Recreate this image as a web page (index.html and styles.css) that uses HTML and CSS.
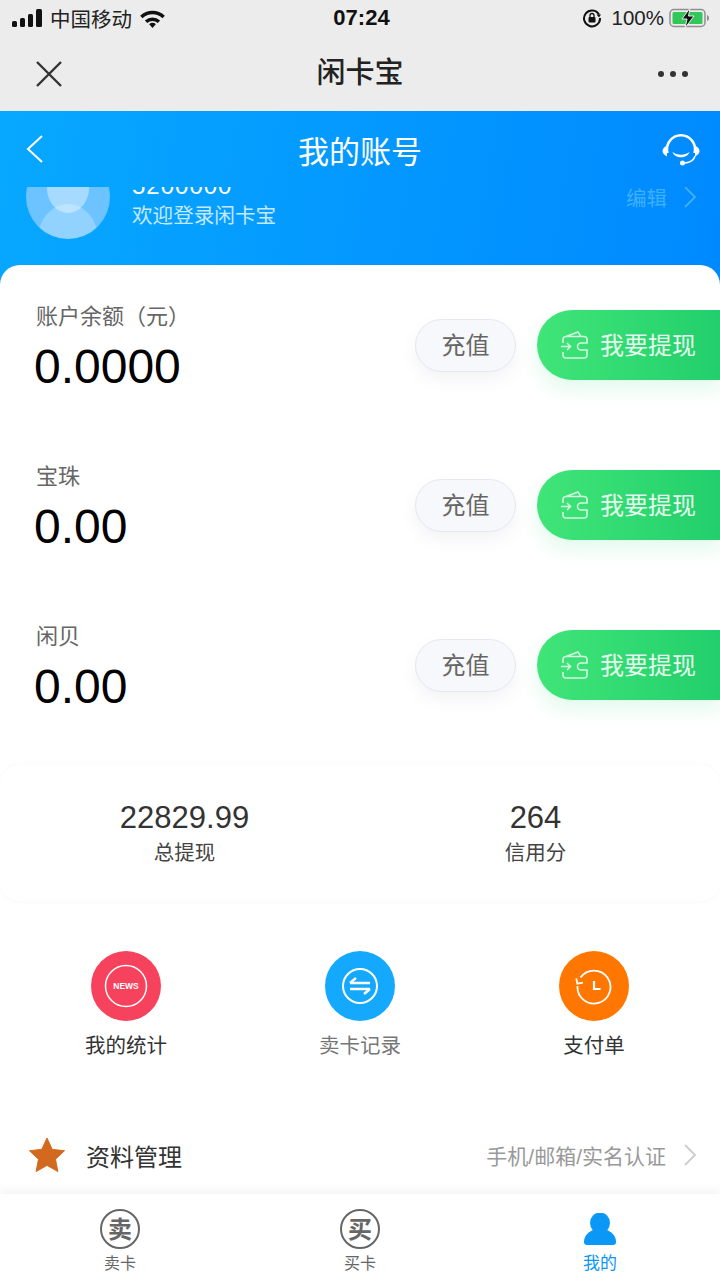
FILE: index.html
```html
<!DOCTYPE html>
<html lang="zh-CN">
<head>
    <meta charset="UTF-8">
    <meta name="viewport" content="width=device-width, initial-scale=1.0">
    <title>闲卡宝</title>
    <link rel="stylesheet" href="styles.css">
</head>
<body>

<div class="top">
    <div class="status">
        <div class="status-left">
            <svg class="signal" width="31" height="18" viewBox="0 0 31 18"><rect x="0" y="12" width="5" height="6" rx="1.500"/><rect x="8" y="9" width="5" height="9" rx="1.500"/><rect x="16" y="5" width="5" height="13" rx="1.500"/><rect x="24" y="0" width="6" height="18" rx="1.500"/></svg>
            <span>中国移动</span>
            <svg width="27" height="19" viewBox="0 0 28 20"><path d="M1 7a19 19 0 0 1 26 0l-2.500 2.800a15 15 0 0 0-21 0z"/><path d="M6 12a12 12 0 0 1 16 0l-2.500 2.800a8 8 0 0 0-11 0z"/><path d="M10.500 16a5 5 0 0 1 7 0L14 20z"/></svg>
        </div>
        <div class="status-time">07:24</div>
        <div class="status-right">
            <svg class="status-lock" width="20" height="20" viewBox="0 0 20 20"><path d="M17 6.500A8 8 0 1 0 18 10" fill="none" stroke="#111" stroke-width="2"/><path d="M14.500 6.500h4.500l-2 3z"/><rect x="6.500" y="9" width="7" height="5.500" rx="1"/><path d="M8 9V7.500a2 2 0 0 1 4 0V9" fill="none" stroke="#111" stroke-width="1.300"/></svg>
            <span>100%</span>
            <svg width="42" height="20" viewBox="0 0 42 20"><rect x="1" y="1.500" width="35" height="17" rx="4" fill="none" stroke="#8f8f8f" stroke-width="1.500"/><rect x="3.500" y="4" width="30" height="12" rx="1.500" fill="#33c759"/><path d="M38 7v6c1.500-.5 2-1.500 2-3s-.5-2.500-2-3z" fill="#8f8f8f"/><path d="M21 0l-8 11h5l-2 9 9-12h-5.500z" fill="#111" stroke="#ececec" stroke-width="1"/></svg>
        </div>
    </div>
    <div class="nav">
        <svg width="28" height="28" viewBox="0 0 28 28"><path d="M2 2l24 24M26 2L2 26" stroke="#333" stroke-width="2.400" fill="none"/></svg>
        <div class="nav-title">闲卡宝</div>
        <div class="dots"><i></i><i></i><i></i></div>
    </div>
</div>

<div class="hero">
    <div class="hero-bar">
        <svg class="hero-back" width="18" height="28" viewBox="0 0 18 28"><path d="M16 1L2 14l14 13" stroke="#fff" stroke-width="2" fill="none"/></svg>
        <div class="hero-title">我的账号</div>
        <svg class="hero-help" width="38" height="34" viewBox="0 0 38 34"><path d="M5.500 21A14 14 0 1 1 32.500 21" fill="none" stroke="#fff" stroke-width="2.600"/><path d="M5 13.500C2 15 .5 17 .5 19s1.500 4 4.500 5.500zM33 13.500c3 1.500 4.500 3.500 4.500 5.500S36 23 33 24.500z" fill="#fff"/><path d="M10.500 20c5 3.500 12 3.500 17 0-2 7-15 7-17 0z" fill="#fff"/><path d="M33 24c-1 4-5 6.500-10 7" fill="none" stroke="#fff" stroke-width="1.500"/><circle cx="20.500" cy="31" r="2.500" fill="#fff"/></svg>
    </div>
    <div class="profile">
        <div class="profile-inner">
            <div class="avatar"><div class="avatar-head"></div><div class="avatar-body"></div></div>
            <div class="profile-text">
                <div class="profile-num">5200000</div>
                <div class="profile-hello">欢迎登录闲卡宝</div>
            </div>
            <div class="profile-edit">
                <span>编辑</span>
                <svg width="14" height="22" viewBox="0 0 14 22"><path d="M2 1l10 10L2 21" stroke="currentColor" stroke-width="1.800" fill="none"/></svg>
            </div>
        </div>
    </div>
</div>

<div class="sheet">
    <div class="balance">
        <div class="balance-info">
            <div class="balance-label">账户余额（元）</div>
            <div class="balance-value">0.0000</div>
        </div>
        <div class="btn-charge">充值</div>
        <div class="btn-cash">
            <svg width="28" height="28" viewBox="0 0 28 28"><path d="M2 12V8.500a3 3 0 0 1 3-3h18a3 3 0 0 1 3 3V12h-6a3.500 3.500 0 0 0 0 7h6v5a3 3 0 0 1-3 3H5a3 3 0 0 1-3-3v-3M5 5.500L17 1l3 4.500M0 15.500h9M6 12l3.500 3.500L6 19" fill="none" stroke="#d5f7e0" stroke-width="1.600"/></svg>
            <span>我要提现</span>
        </div>
    </div>
    <div class="balance">
        <div class="balance-info">
            <div class="balance-label">宝珠</div>
            <div class="balance-value">0.00</div>
        </div>
        <div class="btn-charge">充值</div>
        <div class="btn-cash">
            <svg width="28" height="28" viewBox="0 0 28 28"><path d="M2 12V8.500a3 3 0 0 1 3-3h18a3 3 0 0 1 3 3V12h-6a3.500 3.500 0 0 0 0 7h6v5a3 3 0 0 1-3 3H5a3 3 0 0 1-3-3v-3M5 5.500L17 1l3 4.500M0 15.500h9M6 12l3.500 3.500L6 19" fill="none" stroke="#d5f7e0" stroke-width="1.600"/></svg>
            <span>我要提现</span>
        </div>
    </div>
    <div class="balance">
        <div class="balance-info">
            <div class="balance-label">闲贝</div>
            <div class="balance-value">0.00</div>
        </div>
        <div class="btn-charge">充值</div>
        <div class="btn-cash">
            <svg width="28" height="28" viewBox="0 0 28 28"><path d="M2 12V8.500a3 3 0 0 1 3-3h18a3 3 0 0 1 3 3V12h-6a3.500 3.500 0 0 0 0 7h6v5a3 3 0 0 1-3 3H5a3 3 0 0 1-3-3v-3M5 5.500L17 1l3 4.500M0 15.500h9M6 12l3.500 3.500L6 19" fill="none" stroke="#d5f7e0" stroke-width="1.600"/></svg>
            <span>我要提现</span>
        </div>
    </div>

    <div class="stats">
        <div class="stat">
            <div class="stat-num">22829.99</div>
            <div class="stat-label">总提现</div>
        </div>
        <div class="stat">
            <div class="stat-num">264</div>
            <div class="stat-label">信用分</div>
        </div>
    </div>

    <div class="shortcuts">
        <div class="shortcut">
            <div class="circle circle-red">
                <svg width="44" height="44" viewBox="0 0 44 44"><circle cx="22" cy="22" r="20.500" fill="none" stroke="#fff" stroke-width="1.500"/><text class="news" x="22" y="25" text-anchor="middle">NEWS</text></svg>
            </div>
            <div class="shortcut-label">我的统计</div>
        </div>
        <div class="shortcut">
            <div class="circle circle-blue">
                <svg width="38" height="38" viewBox="0 0 38 38"><circle cx="19" cy="19" r="17" fill="none" stroke="#fff" stroke-width="2"/><path d="M9 16h20M9 16l6-5M29 22H9M29 22l-6 5" fill="none" stroke="#fff" stroke-width="2.400"/></svg>
            </div>
            <div class="shortcut-label shortcut-label-gray">卖卡记录</div>
        </div>
        <div class="shortcut">
            <div class="circle circle-orange">
                <svg width="38" height="38" viewBox="0 0 38 38"><path d="M5.500 10.500A16.500 16.500 0 1 1 2.500 19" fill="none" stroke="#fff" stroke-width="1.800"/><path d="M1.300 11.300l1 5.400 5.700-1" fill="none" stroke="#fff" stroke-width="1.800"/><path d="M19 14v8h6.500" fill="none" stroke="#fff" stroke-width="2.200"/></svg>
            </div>
            <div class="shortcut-label">支付单</div>
        </div>
    </div>

    <div class="item">
        <svg width="36" height="36" viewBox="0 0 38 38"><path d="M19 1l5.500 12 13 1.500-9.500 9 2.500 13L19 30 7.500 36.500l2.500-13-9.500-9 13-1.500z" fill="#d2691e" stroke="#d2691e" stroke-linejoin="round"/></svg>
        <div class="item-title">资料管理</div>
        <div class="item-note">手机/邮箱/实名认证</div>
        <svg width="14" height="22" viewBox="0 0 14 22"><path d="M2 1l10 10L2 21" stroke="#ccc" stroke-width="1.800" fill="none"/></svg>
    </div>
</div>

<div class="tabbar">
    <div class="tab">
        <div class="tab-seal">卖</div>
        <div class="tab-label">卖卡</div>
    </div>
    <div class="tab">
        <div class="tab-seal">买</div>
        <div class="tab-label">买卡</div>
    </div>
    <div class="tab tab-on">
        <svg width="32" height="32" viewBox="0 0 32 32"><ellipse cx="16" cy="10" rx="10" ry="10.500" fill="#0a97f5"/><path d="M0 29c0-7 5-10 9-12h14c4 2 9 5 9 12 0 2-1 3-3 3H3c-2 0-3-1-3-3z" fill="#0a97f5"/></svg>
        <div class="tab-label">我的</div>
    </div>
</div>

</body>
</html>
```

FILE: styles.css
```css
* {
    box-sizing: border-box;
}
body {
    margin: 0;
    width: 720px;
    height: 1280px;
    overflow: hidden;
    position: relative;
    background-color: #fff;
    font-family: "Liberation Sans", "Noto Sans CJK SC", sans-serif;
    color: #333;
}
.top {
    height: 111px;
    background-color: #ececec;
}
.status {
    height: 36px;
    padding: 0 9px 0 12px;
    display: grid;
    grid-template-columns: 1fr auto 1fr;
    align-items: center;
    font-size: 20.500px;
    color: #222;
}
.status-left {
    display: flex;
    align-items: center;
    gap: 7px;
}
.status-left svg,
.status-right svg {
    fill: #111;
}
.status-time {
    font-weight: bold;
    font-size: 22px;
    color: #111;
}
.status-right {
    display: flex;
    align-items: center;
    justify-content: flex-end;
    gap: 5px;
    font-size: 20.500px;
}
.status-lock {
    margin-right: 5px;
}
.nav {
    height: 75px;
    padding: 0 32px;
    display: grid;
    grid-template-columns: 1fr auto 1fr;
    align-items: center;
}
.nav svg {
    margin-left: 3px;
}
.nav-title {
    padding-bottom: 8px;
    font-size: 29px;
    font-weight: 500;
    color: #222;
}
.dots {
    justify-self: end;
    display: flex;
    gap: 6px;
}
.dots i {
    width: 6px;
    height: 6px;
    border-radius: 50%;
    background-color: #333;
}
.hero {
    height: 174px;
    background: linear-gradient(100deg, #07a8ff, #0089ff);
    color: #fff;
}
.hero-bar {
    height: 76px;
    padding: 0 20px;
    display: grid;
    grid-template-columns: 1fr auto 1fr;
    align-items: center;
}
.hero-back {
    margin-left: 6px;
}
.hero-title {
    font-size: 31px;
}
.hero-help {
    justify-self: end;
}
.profile {
    height: 78px;
    overflow: hidden;
}
.profile-inner {
    margin-top: -32px;
    padding: 0 23px 0 26px;
    display: flex;
    align-items: flex-start;
}
.avatar {
    width: 84px;
    height: 84px;
    border-radius: 50%;
    background-color: #6cc3ff;
    position: relative;
    overflow: hidden;
    flex-shrink: 0;
}
.avatar-head {
    position: absolute;
    left: 21px;
    top: 8px;
    width: 42px;
    height: 50px;
    border-radius: 50%;
    background-color: rgba(255, 255, 255, 0.4);
}
.avatar-body {
    position: absolute;
    left: 12px;
    top: 49px;
    width: 60px;
    height: 70px;
    border-radius: 50%;
    background-color: rgba(255, 255, 255, 0.25);
}
.profile-text {
    margin-left: 22px;
}
.profile-num {
    font-size: 24px;
    line-height: 28px;
    margin-top: 17px;
    letter-spacing: 1px;
}
.profile-hello {
    font-size: 20.600px;
    line-height: 28px;
    margin-top: 2px;
    color: #c4e8ff;
}
.profile-edit {
    margin-left: auto;
    margin-top: 27px;
    display: flex;
    align-items: center;
    gap: 16px;
    font-size: 20.500px;
    color: #3fb0ff;
}
.sheet {
    position: relative;
    margin-top: -20px;
    height: 930px;
    background-color: #fff;
    border-radius: 20px 20px 0 0;
}
.balance {
    height: 160px;
    display: flex;
    align-items: center;
}
.balance-info {
    margin-left: 34px;
    margin-right: auto;
    padding-top: 11px;
}
.balance-label {
    font-size: 22px;
    line-height: 30px;
    color: #666;
    margin-left: 2px;
    margin-bottom: 3px;
}
.balance-value {
    font-size: 48px;
    line-height: 64px;
    color: #000;
}
.btn-charge {
    width: 101px;
    height: 53px;
    margin-right: 21px;
    padding-bottom: 4px;
    border: 1px solid #e6e6ef;
    border-radius: 27px;
    background-color: #f7f8fb;
    box-shadow: 0 8px 16px rgba(120, 120, 150, 0.08);
    display: flex;
    align-items: center;
    justify-content: center;
    font-size: 24px;
    color: #666;
}
.btn-cash {
    width: 183px;
    height: 70px;
    padding-left: 24px;
    border-radius: 35px 0 0 35px;
    background: linear-gradient(90deg, #40e578, #22cf6c);
    box-shadow: 0 10px 20px rgba(50, 220, 120, 0.14);
    display: flex;
    align-items: center;
    gap: 11px;
    font-size: 24px;
    color: #e6fbee;
}
.btn-cash span {
    padding-bottom: 4px;
}
.stats {
    margin-top: 20px;
    height: 136px;
    padding: 2px 9px 0;
    border-radius: 20px;
    box-shadow: 0 0 6px rgba(0, 0, 0, 0.035);
    display: grid;
    grid-template-columns: 1fr 1fr;
    align-items: center;
}
.stat {
    text-align: center;
}
.stat-num {
    font-size: 31px;
    line-height: 36px;
    color: #333;
}
.stat-label {
    margin-top: 2px;
    font-size: 20.500px;
    line-height: 30px;
    color: #444;
}
.shortcuts {
    margin-top: 50px;
    padding: 0 9px;
    display: grid;
    grid-template-columns: repeat(3, 234px);
}
.shortcut {
    display: flex;
    flex-direction: column;
    align-items: center;
}
.circle {
    width: 70px;
    height: 70px;
    border-radius: 50%;
    display: flex;
    align-items: center;
    justify-content: center;
}
.circle-red {
    background-color: #f6425c;
}
.circle-blue {
    background-color: #14a9ff;
}
.circle-orange {
    background-color: #ff7700;
}
.news {
    font-size: 8.500px;
    font-weight: bold;
    fill: #fff;
}
.shortcut-label {
    margin-top: 10px;
    font-size: 20.500px;
    line-height: 30px;
    color: #333;
}
.shortcut-label-gray {
    color: #777;
}
.item {
    margin-top: 64px;
    height: 60px;
    padding: 0 23px 0 29px;
    display: flex;
    align-items: center;
}
.item-title {
    margin-left: 21px;
    margin-right: auto;
    font-size: 24px;
    color: #333;
}
.item-note {
    margin-right: 17px;
    font-size: 21px;
    color: #999;
}
.tabbar {
    position: absolute;
    left: 0;
    right: 0;
    bottom: 0;
    height: 86px;
    background-color: #fff;
    box-shadow: 0 -4px 10px rgba(0, 0, 0, 0.05);
    display: grid;
    grid-template-columns: repeat(3, 240px);
    padding-top: 15px;
}
.tab {
    display: flex;
    flex-direction: column;
    align-items: center;
}
.tab-seal {
    width: 40px;
    height: 40px;
    padding-bottom: 3px;
    border: 2px solid #666;
    border-radius: 50%;
    display: flex;
    align-items: center;
    justify-content: center;
    font-size: 24px;
    font-weight: bold;
    color: #666;
}
.tab-label {
    margin-top: 3px;
    font-size: 16px;
    line-height: 24px;
    color: #666;
}
.tab-on svg {
    margin-top: 4px;
}
.tab-on .tab-label {
    margin-top: 7px;
    font-size: 17px;
    color: #0a97f5;
}
```
